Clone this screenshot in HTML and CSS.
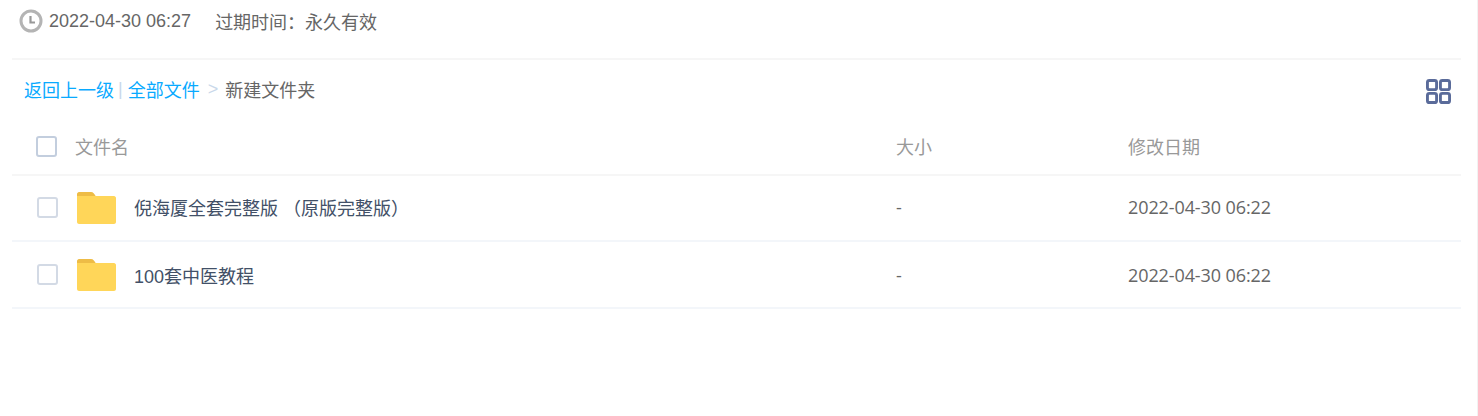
FILE: index.html
```html
<!DOCTYPE html>
<html lang="zh-CN">
<head>
    <meta charset="UTF-8">
    <title>新建文件夹</title>
    <link rel="stylesheet" href="styles.css">
</head>
<body>
    <div class="container">
        <!-- share info -->
        <div class="info">
            <svg class="clock" width="24" height="24" viewBox="0 0 24 24">
                <circle cx="12" cy="12" r="10" fill="none" stroke="#b4b4b4" stroke-width="3"/>
                <path d="M11.5 7v6.5h4.5" fill="none" stroke="#999" stroke-width="2.2"/>
            </svg>
            <span class="time">2022-04-30 06:27</span>
            <span class="expire">过期时间：永久有效</span>
        </div>

        <!-- breadcrumb -->
        <div class="crumbs">
            <div class="path">
                <a href="#">返回上一级</a>
                <span class="sep">|</span>
                <a href="#">全部文件</a>
                <span class="arrow">&gt;</span>
                <span>新建文件夹</span>
            </div>
            <svg class="grid-icon" width="25" height="25" viewBox="0 0 26 26">
                <rect x="1.5" y="1.5" width="9.5" height="9.5" rx="2" />
                <rect x="15" y="1.5" width="9.5" height="9.5" rx="2" />
                <rect x="1.5" y="15" width="9.5" height="9.5" rx="2" />
                <rect x="15" y="15" width="9.5" height="9.5" rx="2" />
            </svg>
        </div>

        <!-- file list -->
        <div class="row head">
            <div class="col-check"><span class="checkbox"></span></div>
            <div class="col-name">文件名</div>
            <div class="col-size">大小</div>
            <div class="col-date">修改日期</div>
        </div>
        <div class="row item first">
            <div class="col-check"><span class="checkbox"></span></div>
            <div class="col-name">
                <svg class="folder" width="39" height="32" viewBox="0 0 39 32">
                    <path d="M0 2c0-1 1-2 2-2h12c2 0 4 2 5 5H0z" fill="#eebc46"/>
                    <path d="M0 4h37c1 0 2 1 2 2v24c0 1-1 2-2 2H2c-1 0-2-1-2-2z" fill="#ffd659"/>
                </svg>
                <span class="file-name">倪海厦全套完整版 （原版完整版）</span>
            </div>
            <div class="col-size">-</div>
            <div class="col-date">2022-04-30 06:22</div>
        </div>
        <div class="row item">
            <div class="col-check"><span class="checkbox"></span></div>
            <div class="col-name">
                <svg class="folder" width="39" height="32" viewBox="0 0 39 32">
                    <path d="M0 2c0-1 1-2 2-2h12c2 0 4 2 5 5H0z" fill="#eebc46"/>
                    <path d="M0 4h37c1 0 2 1 2 2v24c0 1-1 2-2 2H2c-1 0-2-1-2-2z" fill="#ffd659"/>
                </svg>
                <span class="file-name">100套中医教程</span>
            </div>
            <div class="col-size">-</div>
            <div class="col-date">2022-04-30 06:22</div>
        </div>
    </div>
</body>
</html>
```
FILE: styles.css
```css
html, body {
    margin: 0;
    padding: 0;
    background-color: #fff;
}
body {
    font-family: "Liberation Sans", "Noto Sans CJK SC", sans-serif;
    font-size: 18px;
    color: #666;
    height: 416px;
    overflow: hidden;
}
.container {
    box-sizing: border-box;
    height: 416px;
    padding: 0 16px 0 12px;
    border-right: 1px solid #f2f2f2;
}
.info {
    display: flex;
    align-items: center;
    height: 60px;
    padding: 0 0 16px 7px;
    box-sizing: border-box;
    border-bottom: 2px solid #f6f6f6;
}
.clock {
    margin-right: 6px;
}
.expire {
    margin-left: 24px;
}
.crumbs {
    display: flex;
    justify-content: space-between;
    align-items: center;
    box-sizing: border-box;
    height: 60px;
    padding: 0 10px 2px 12px;
}
.crumbs a {
    color: #09aaff;
    text-decoration: none;
}
.path {
    display: flex;
    align-items: center;
}
.sep {
    color: #c9d8ea;
    margin: 0 5px 0 4px;
}
.arrow {
    color: #c9d8ea;
    margin: 0 7px 0 8px;
}
.grid-icon {
    margin-top: 5px;
}
.grid-icon rect {
    fill: none;
    stroke: #5a6b9a;
    stroke-width: 3;
}
.row {
    display: flex;
    align-items: center;
    box-sizing: border-box;
    border-bottom: 2px solid #f3f6fa;
}
.head {
    height: 56px;
    padding-bottom: 2px;
    color: #999;
    border-bottom-color: #f6f6f6;
}
.item {
    height: 67px;
}
.first {
    height: 66px;
    padding-bottom: 2px;
}
.first .folder {
    margin-top: 2px;
}
.col-check {
    width: 63px;
    padding-left: 25px;
    box-sizing: border-box;
    display: flex;
}
.col-name {
    display: flex;
    align-items: center;
    width: 821px;
}
.col-size {
    width: 232px;
}
.checkbox {
    display: block;
    box-sizing: border-box;
    width: 21px;
    height: 21px;
    border: 2px solid #d3dae5;
    border-radius: 3px;
}
.head .checkbox {
    margin-left: -1px;
    border-color: #c3cede;
}
.folder {
    margin: 0 18px 0 2px;
}
.file-name {
    color: #425067;
}
.item .col-size,
.item .col-date {
    font-family: "Open Sans", "Noto Sans CJK SC", sans-serif;
    letter-spacing: -0.1px;
}
```
